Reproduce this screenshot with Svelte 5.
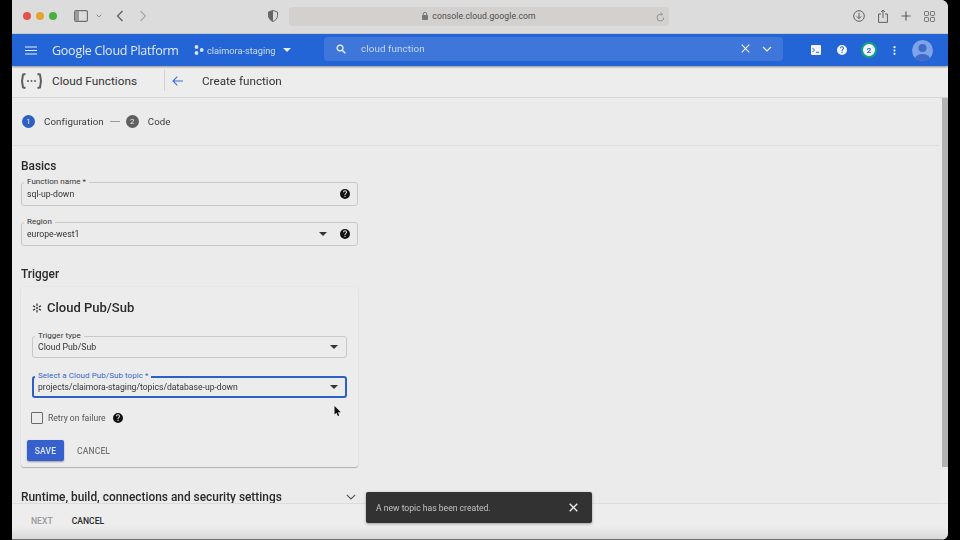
<script>
  const help = "M8 1a7 7 0 1 0 0 14A7 7 0 0 0 8 1Zm.7 11.2H7.3v-1.4h1.4v1.4Zm1.5-5.1-.6.6c-.5.5-.9.9-.9 2H7.3v-.3c0-.8.3-1.5.9-2l.8-.9c.2-.2.4-.5.4-.9a1.4 1.4 0 0 0-2.8 0H5.2a2.8 2.8 0 0 1 5.6 0c0 .6-.2 1.100-.6 1.500Z";
</script>

<div class="screen">
  <div class="window">
    <div class="safari">
      <div class="lights">
        <span class="light red"></span><span class="light amber"></span><span class="light green"></span>
      </div>
      <svg class="sidebar" width="14" height="12" viewBox="0 0 14 12"><rect x=".6" y=".6" width="12.800" height="10.800" rx="1.500" fill="none" stroke="#6e6e6e" stroke-width="1.200"/><rect x="1" y="1" width="4" height="10" fill="#9a9a9a"/></svg>
      <svg class="chev-small" width="6" height="4" viewBox="0 0 6 4"><path d="M.6.6 3 3l2.400-2.400" fill="none" stroke="#8a8a8a" stroke-width="1"/></svg>
      <svg class="back" width="8" height="12" viewBox="0 0 8 12"><path d="M6.500 1 1.500 6l5 5" fill="none" stroke="#5d5d5d" stroke-width="1.200"/></svg>
      <svg class="fwd" width="8" height="12" viewBox="0 0 8 12"><path d="M1.500 1l5 5-5 5" fill="none" stroke="#a8a8a8" stroke-width="1.200"/></svg>
      <svg class="shield" width="10" height="12" viewBox="0 0 10 12"><path d="M5 .5 9.500 2v3.500C9.500 8.500 7.500 10.500 5 11.500 2.500 10.500.5 8.500.5 5.500V2Z" fill="#dcdcdc" stroke="#666" stroke-width="1"/><path d="M5 .5V11.500C2.500 10.500.5 8.500.5 5.500V2Z" fill="#666"/></svg>
      <div class="url">
        <svg width="6" height="8" viewBox="0 0 6 8"><rect y="3" width="6" height="5" rx=".8" fill="#777"/><path d="M1.300 3.500V2a1.700 1.700 0 0 1 3.400 0v1.500" fill="none" stroke="#777"/></svg>
        <span>console.cloud.google.com</span>
        <svg class="reload" width="9" height="10" viewBox="0 0 9 10"><path d="M7.800 5.500A3.400 3.400 0 1 1 4.500 2.200H6" fill="none" stroke="#8a8a8a" stroke-width=".9"/><path d="M4.800.6 6.400 2.200 4.800 3.800" fill="none" stroke="#8a8a8a" stroke-width=".9"/></svg>
      </div>
      <div class="safari-right">
        <svg width="12" height="12" viewBox="0 0 12 12"><circle cx="6" cy="6" r="5.300" fill="none" stroke="#5f5f5f" stroke-width="1"/><path d="M6 2.800v5.600M3.800 6.400 6 8.600l2.200-2.200" fill="none" stroke="#5f5f5f" stroke-width="1"/></svg>
        <svg width="10" height="14" viewBox="0 0 10 14"><path d="M3 5H.6v8.400h8.800V5H7M5 9V1M3 3l2-2 2 2" fill="none" stroke="#5f5f5f" stroke-width="1"/></svg>
        <svg width="10" height="10" viewBox="0 0 10 10"><path d="M5 .5v9M.5 5h9" stroke="#5f5f5f" stroke-width="1.200"/></svg>
        <svg width="11" height="11" viewBox="0 0 11 11" fill="none" stroke="#6a6a6a" stroke-width=".9"><rect x=".5" y=".5" width="4" height="4" rx=".7"/><rect x="6.500" y=".5" width="4" height="4" rx=".7"/><rect x=".5" y="6.500" width="4" height="4" rx=".7"/><rect x="6.500" y="6.500" width="4" height="4" rx=".7"/></svg>
      </div>
    </div>

    <header class="gcp">
      <svg class="menu" width="12" height="9" viewBox="0 0 12 9"><path d="M0 1h12M0 4.500h12M0 8h12" stroke="#e8eefb" stroke-width="1.200"/></svg>
      <span class="brand">Google Cloud Platform</span>
      <svg class="dots" width="10" height="10" viewBox="0 0 10 10" fill="#d8e3f8"><circle cx="2.500" cy="2" r="1.900"/><circle cx="2.500" cy="8" r="1.900"/><circle cx="7.700" cy="5" r="1.900"/></svg>
      <span class="project">claimora-staging</span>
      <span class="caret light-caret"></span>
      <div class="search">
        <svg width="10" height="10" viewBox="0 0 10 10"><circle cx="4" cy="4" r="2.900" fill="none" stroke="#f0f4fd" stroke-width="1.300"/><path d="M6.200 6.200 9.300 9.300" stroke="#f0f4fd" stroke-width="1.400"/></svg>
        <span class="query">cloud function</span>
        <svg class="clear" width="9" height="9" viewBox="0 0 9 9"><path d="M.7.700l7.600 7.600M8.300.700.7 8.300" stroke="#f0f4fd" stroke-width="1.100"/></svg>
        <svg class="expand" width="10" height="6" viewBox="0 0 10 6"><path d="M1 1l4 4 4-4" fill="none" stroke="#f0f4fd" stroke-width="1.200"/></svg>
      </div>
      <svg class="cloudshell" width="10" height="10" viewBox="0 0 10 10"><rect width="10" height="10" rx="1" fill="#f2f5fd"/><path d="M1.500 3 3.500 5 1.500 7" fill="none" stroke="#2365d6" stroke-width="1"/><path d="M5 7.300h3" stroke="#2365d6" stroke-width="1"/></svg>
      <svg class="q" width="10" height="10" viewBox="1 1 14 14"><path d={help} fill="#f2f5fd"/></svg>
      <span class="badge">2</span>
      <svg class="kebab" width="3" height="9" viewBox="0 0 3 9" fill="#f2f5fd"><circle cx="1.500" cy="1.200" r="1.100"/><circle cx="1.500" cy="4.500" r="1.100"/><circle cx="1.500" cy="7.800" r="1.100"/></svg>
      <svg class="avatar" width="21" height="21" viewBox="0 0 21 21"><defs><clipPath id="ac"><circle cx="10.500" cy="10.500" r="10.500"/></clipPath></defs><circle cx="10.500" cy="10.500" r="10.500" fill="#7ea3ea"/><g clip-path="url(#ac)" fill="#3e6bc6"><circle cx="10.500" cy="8" r="4"/><ellipse cx="10.500" cy="19" rx="7.500" ry="5"/></g></svg>
    </header>

    <div class="subbar">
      <svg class="cf-logo" width="21" height="16" viewBox="0 0 21 16"><path d="M4.500 1 2 1.500 1 8l1 6.500 2.500.5M16.500 1 19 1.500 20 8l-1 6.500-2.500.5" fill="none" stroke="#5e5e5e" stroke-width="2"/><circle cx="7" cy="8" r="1" fill="#5e5e5e"/><circle cx="10.500" cy="8" r="1" fill="#5e5e5e"/><circle cx="14" cy="8" r="1" fill="#5e5e5e"/></svg>
      <span class="product">Cloud Functions</span>
      <span class="divider"></span>
      <svg class="arrow" width="11" height="10" viewBox="0 0 11 10"><path d="M5.300.6 1 5l4.300 4.400M1 5h10" fill="none" stroke="#3f6fd0" stroke-width="1.100"/></svg>
      <span class="title">Create function</span>
    </div>

    <div class="body">
      <main class="scroll">
        <div class="steps">
          <span class="step active">1</span>
          <span class="step-label">Configuration</span>
          <span class="dash"></span>
          <span class="step">2</span>
          <span class="step-label">Code</span>
        </div>
        <div class="form">
          <h2 class="basics">Basics</h2>
          <div class="field">
            <label>Function name *</label>
            <span class="value">sql-up-down</span>
            <svg class="help" width="10" height="10" viewBox="1 1 14 14"><path d={help} fill="#111"/></svg>
          </div>
          <div class="field region">
            <label>Region</label>
            <span class="value">europe-west1</span>
            <span class="caret"></span>
            <svg class="help" width="10" height="10" viewBox="1 1 14 14"><path d={help} fill="#111"/></svg>
          </div>
          <h2 class="trigger">Trigger</h2>
          <section class="card">
            <div class="card-title">
              <svg width="10" height="10" viewBox="0 0 10 10" fill="none" stroke="#222" stroke-width="1.100"><circle cx="5" cy="5" r=".9" fill="#222" stroke="none"/><path d="M5 .5V3M5 7v2.500M1 2.700l2.200 1.300M6.800 6l2.200 1.300M1 7.300 3.200 6M6.800 4 9 2.700"/></svg>
              <span>Cloud Pub/Sub</span>
            </div>
            <div class="field inner">
              <label>Trigger type</label>
              <span class="value">Cloud Pub/Sub</span>
              <span class="caret"></span>
            </div>
            <div class="field inner focused">
              <label>Select a Cloud Pub/Sub topic *</label>
              <span class="value">projects/claimora-staging/topics/database-up-down</span>
              <span class="caret"></span>
            </div>
            <div class="retry">
              <span class="checkbox"></span>
              <span>Retry on failure</span>
              <svg width="10" height="10" viewBox="1 1 14 14"><path d={help} fill="#111"/></svg>
            </div>
            <div class="actions">
              <button class="save">SAVE</button>
              <button class="cancel-card">CANCEL</button>
            </div>
          </section>
          <div class="runtime">
            <span>Runtime, build, connections and security settings</span>
            <svg width="10" height="6" viewBox="0 0 10 6"><path d="M.8.800 5 5 9.200.8" fill="none" stroke="#555" stroke-width="1.100"/></svg>
          </div>
        </div>
      </main>
      <div class="scrollbar"><span class="thumb"></span></div>
    </div>

    <footer class="foot">
      <span class="next">NEXT</span>
      <span class="cancel">CANCEL</span>
    </footer>

    <div class="toast">
      <span>A new topic has been created.</span>
      <svg width="9" height="9" viewBox="0 0 9 9"><path d="M.7.700l7.600 7.600M8.300.700.7 8.300" stroke="#f2f2f2" stroke-width="1.300"/></svg>
    </div>
    <svg class="cursor" width="7" height="11" viewBox="0 0 7 11"><path d="M.5 0v8.500l2-1.800 1.300 3.300 1.400-.6L4 6.200h2.800Z" fill="#111"/></svg>
  </div>
</div>

<style>
  :global(body) { margin: 0; background: #000; }
  .screen {
    width: 960px;
    height: 540px;
    background: #000;
    padding-left: 12px;
    box-sizing: border-box;
    overflow: hidden;
    font-family: Roboto, "Liberation Sans", sans-serif;
  }
  .window {
    position: relative;
    width: 936px;
    height: 540px;
    display: flex;
    flex-direction: column;
    background: #ebebeb;
    border-radius: 0 7px 7px 0;
    overflow: hidden;
    filter: blur(.3px);
  }
  svg { display: block; flex: none; }

  .safari {
    height: 34px;
    flex: none;
    display: flex;
    align-items: center;
    background: #dcdcdc;
    border-bottom: 1px solid #cfcfcf;
    box-sizing: border-box;
    padding-bottom: 1px;
  }
  .lights { display: flex; gap: 5px; margin-left: 11px; }
  .light { width: 8px; height: 8px; border-radius: 50%; }
  .red { background: #e0524c; }
  .amber { background: #e2a72e; }
  .green { background: #45b03f; }
  .sidebar { margin-left: 17px; }
  .chev-small { margin-left: 8px; }
  .back { margin-left: 14px; }
  .fwd { margin-left: 15px; }
  .shield { margin-left: 121px; }
  .url {
    width: 380px;
    height: 19px;
    margin-left: 11px;
    background: #d3d0d0;
    border-radius: 4px;
    display: flex;
    align-items: center;
    justify-content: center;
    gap: 4px;
    position: relative;
    font-size: 8.600px;
    color: #4c4c4c;
    letter-spacing: .1px;
  }
  .reload { position: absolute; right: 4px; top: 5px; }
  .safari-right {
    margin-left: 184px;
    display: flex;
    align-items: center;
    gap: 13px;
  }

  .gcp {
    height: 32px;
    flex: none;
    display: flex;
    align-items: center;
    background: #2365d6;
    box-shadow: 0 1px 2px rgba(0, 0, 0, .4);
    color: #eef3fd;
    position: relative;
    z-index: 1;
  }
  .menu { margin-left: 13px; }
  .brand { margin-left: 15px; font-size: 12.500px; color: #e2eafa; font-family: "Open Sans", Roboto, sans-serif; letter-spacing: -.25px; width: 131px; white-space: nowrap; }
  .dots { margin-left: 11px; }
  .project { margin-left: 3px; font-size: 9.200px; color: #cfdcf6; white-space: nowrap; width: 71px; }
  .caret {
    width: 0; height: 0;
    border-left: 4px solid transparent;
    border-right: 4px solid transparent;
    border-top: 4px solid #333;
    flex: none;
  }
  .light-caret { border-top-color: #e8eefb; margin-left: 5px; }
  .search {
    margin-left: 33px;
    width: 459px;
    height: 24px;
    background: #3f76d9;
    border-radius: 4px;
    display: flex;
    align-items: center;
    padding-left: 12px;
    box-sizing: border-box;
    margin-bottom: 3px;
  }
  .query { margin-left: 15px; font-size: 9.800px; color: #c7d7f5; flex: 1; letter-spacing: .1px; }
  .clear { margin-right: 12px; }
  .expand { margin-right: 11px; }
  .cloudshell { margin-left: 28px; }
  .q { margin-left: 16px; }
  .badge {
    width: 12px; height: 12px;
    margin-left: 14px;
    border-radius: 50%;
    background: #f2f5fd;
    border: 2px solid #12a37f;
    color: #2365d6;
    font-size: 8px;
    font-weight: 700;
    display: flex; align-items: center; justify-content: center;
  }
  .kebab { margin-left: 16px; }
  .avatar { margin-left: 16px; }

  .subbar {
    height: 32px;
    flex: none;
    display: flex;
    align-items: center;
    background: #ededed;
    border-bottom: 1px solid #d6d6d6;
    box-sizing: border-box;
    padding-bottom: 2px;
  }
  .cf-logo { margin-left: 9px; }
  .product { margin-left: 10px; font-size: 11.800px; color: #333; width: 85px; white-space: nowrap; }
  .divider { width: 1px; height: 21px; background: #d4d4d4; margin-left: 27px; }
  .arrow { margin-left: 7px; }
  .title { margin-left: 19px; font-size: 11.700px; color: #333; }

  .body { flex: 1; min-height: 0; display: flex; overflow: hidden; }
  .scroll { flex: 1; min-width: 0; }
  .scrollbar { width: 7px; background: #ececec; position: relative; }
  .thumb { position: absolute; left: 1px; right: 0; top: 0; height: 369px; background: #b3b3b3; }

  .steps {
    height: 48px;
    display: flex;
    align-items: center;
    border-bottom: 1px solid #dedede;
    padding-left: 10px;
    box-sizing: border-box;
    font-size: 9.700px;
    color: #3a3a3a;
    margin-right: 2px;
  }
  .step {
    width: 13px; height: 13px; border-radius: 50%;
    background: #5f5f5f; color: #eee;
    font-size: 8px;
    display: flex; align-items: center; justify-content: center;
    flex: none;
  }
  .step.active { background: #2d5fc4; }
  .step-label { margin-left: 9px; letter-spacing: .1px; }
  .dash { width: 10px; height: 1px; background: #9a9a9a; margin: 0 6px 0 6px; }

  .form { padding-left: 9px; width: 337px; }
  h2 { margin: 0; font-weight: 500; font-size: 11.900px; line-height: 14px; color: #2a2a2a; }
  .basics { margin-top: 13px; }
  .trigger { margin-top: 21px; }

  .field {
    position: relative;
    height: 24px;
    margin-top: 9px;
    border: 1px solid #c8c8c8;
    border-radius: 3px;
    display: flex;
    align-items: center;
    padding: 0 7px 0 5px;
    box-sizing: border-box;
    font-size: 8.700px;
    color: #333;
  }
  .region { margin-top: 16px; }
  .field label {
    position: absolute;
    left: 2px;
    top: -7px;
    padding: 0 3px;
    background: #ebebeb;
    font-size: 8px;
    line-height: 11px;
    color: #333;
    letter-spacing: .05px;
  }
  .value { flex: 1; white-space: nowrap; }
  .region .caret { margin-right: 13px; }

  .card {
    margin-top: 6px;
    height: 180px;
    padding: 0 11px;
    border-radius: 3px;
    background: #ececec;
    box-shadow: 0 1px 1px rgba(0,0,0,.25), 0 0 2px rgba(0,0,0,.06);
    box-sizing: border-box;
    display: flex;
    flex-direction: column;
  }
  .card-title {
    height: 15px;
    margin-top: 13px;
    display: flex;
    align-items: center;
    gap: 5px;
    font-size: 13px;
    font-weight: 500;
    color: #2a2a2a;
  }
  .inner { margin-top: 21px; flex: none; padding-right: 8px; height: 22px; }
  .inner + .inner { margin-top: 18px; height: 22px; }
  .focused { border: 2px solid #2d5fc4; padding-left: 4px; padding-right: 7px; color: #333; font-size: 8.600px; }
  .focused label { color: #3566cc; top: -8px; left: 1px; }
  .retry {
    display: flex;
    align-items: center;
    margin-top: 13px;
    font-size: 8.600px;
    color: #555;
    height: 13px;
    gap: 4px;
  }
  .retry svg { margin-left: 3px; }
  .checkbox { width: 10px; height: 10px; border: 1px solid #6a6a6a; border-radius: 1px; flex: none; margin-left: -1px; margin-right: 1px; }
  .actions { display: flex; align-items: center; margin-top: 16px; margin-left: -5px; }
  button {
    border: 0; padding: 0; background: none;
    font-family: inherit; font-size: 8.600px; font-weight: 500;
    letter-spacing: .1px;
  }
  .save {
    width: 37px; height: 21px;
    background: #3560cd;
    color: #dfe7f8;
    border-radius: 2px;
    box-shadow: 0 1px 2px rgba(0,0,0,.35);
  }
  .cancel-card { margin-left: 13px; color: #777; }
  .runtime {
    margin-top: 23px;
    height: 14px;
    display: flex;
    align-items: center;
    justify-content: space-between;
    font-size: 11.900px;
    font-weight: 500;
    color: #2a2a2a;
    white-space: nowrap;
  }
  .runtime svg { margin-right: 2px; }

  .foot {
    height: 37px;
    flex: none;
    display: flex;
    align-items: center;
    background: linear-gradient(#ededed 62%, #d9d9d9 97%, #6f6f6f 97%);
    border-top: 1px solid #dcdcdc;
    box-sizing: border-box;
    padding: 0 0 2px 19px;
    font-size: 8.600px;
    font-weight: 500;
  }
  .next { color: #9a9a9a; }
  .cancel { color: #2a2a2a; margin-left: 19px; }

  .toast {
    position: absolute;
    left: 354px;
    top: 492px;
    width: 226px;
    height: 31px;
    background: #323232;
    border-radius: 2px;
    box-shadow: 0 1px 3px rgba(0,0,0,.35);
    display: flex;
    align-items: center;
    justify-content: space-between;
    padding: 0 14px 0 10px;
    box-sizing: border-box;
    font-size: 8.600px;
    color: #c4c4c4;
    z-index: 2;
  }
  .cursor { position: absolute; left: 321.500px; top: 406px; z-index: 3; }
</style>
